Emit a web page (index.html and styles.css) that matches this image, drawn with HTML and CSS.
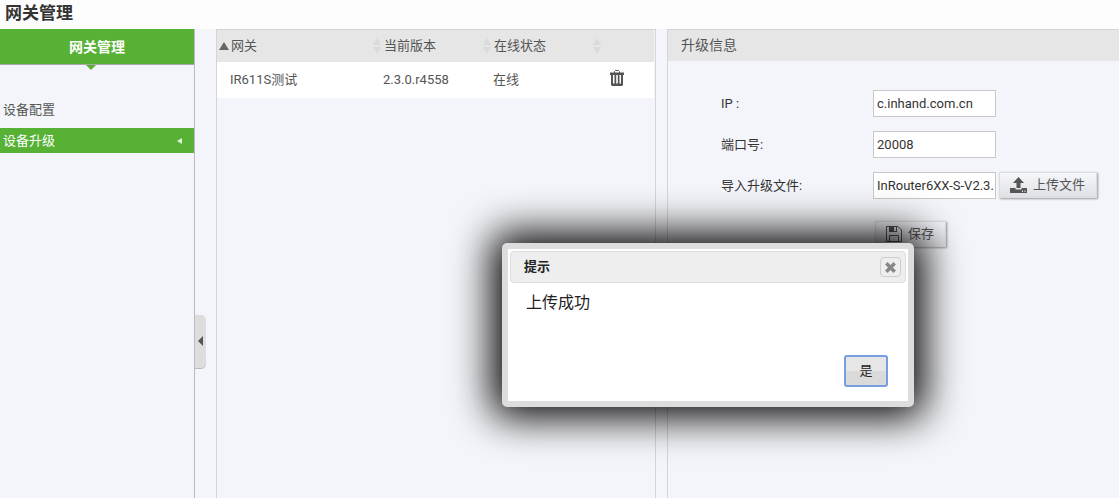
FILE: index.html
```html
<!DOCTYPE html>
<html lang="zh-CN">
<head>
<meta charset="utf-8">
<title>网关管理</title>
<link rel="stylesheet" href="styles.css">
</head>
<body>
<header class="page-header"><h1 class="page-title">网关管理</h1></header>
<div class="layout">
  <nav class="sidebar">
    <h2 class="sidebar-title">网关管理</h2>
    <ul class="menu">
      <li><a class="menu-link" href="#config">设备配置</a></li>
      <li><a class="menu-link active" href="#upgrade">设备升级</a></li>
    </ul>
  </nav>
  <div class="gutter"><button class="collapse" type="button" aria-label="收起"></button></div>
  <main class="content">
    <section class="panel devices">
      <table class="device-table">
        <colgroup><col class="col-name"><col class="col-version"><col class="col-status"><col></colgroup>
        <thead>
          <tr>
            <th><span class="th-inner"><i class="sorted"></i>网关<svg class="sort" viewBox="0 0 8 16"><path d="M4 0 8 7H0zM0 9h8L4 16z"/></svg></span></th>
            <th><span class="th-inner">当前版本<svg class="sort" viewBox="0 0 8 16"><path d="M4 0 8 7H0zM0 9h8L4 16z"/></svg></span></th>
            <th><span class="th-inner">在线状态<svg class="sort" viewBox="0 0 8 16"><path d="M4 0 8 7H0zM0 9h8L4 16z"/></svg></span></th>
            <th></th>
          </tr>
        </thead>
        <tbody>
          <tr>
            <td>IR611S测试</td>
            <td>2.3.0.r4558</td>
            <td>在线</td>
            <td><button class="delete" type="button" aria-label="删除"><svg width="14" height="16" viewBox="0 0 14 16"><path fill="none" stroke="#555" d="M4.500 3V1.500l1-1h3l1 1V3"/><path fill="#555" fill-rule="evenodd" d="M0 2.500h14V5h-1v10l-1 1H2l-1-1V5H0zM3 5v8.500h1.500V5zm3.200 0v8.500h1.600V5zm3.300 0v8.500H11V5z"/></svg></button></td>
          </tr>
        </tbody>
      </table>
    </section>
    <section class="panel upgrade">
      <h3 class="panel-title">升级信息</h3>
      <form class="form">
        <label for="ip">IP :</label>
        <div class="field"><input class="text" id="ip" type="text" value="c.inhand.com.cn"></div>
        <label for="port">端口号:</label>
        <div class="field"><input class="text" id="port" type="text" value="20008"></div>
        <label for="file">导入升级文件:</label>
        <div class="field">
          <input class="text file-name" id="file" type="text" value="InRouter6XX-S-V2.3.">
          <button class="btn" type="button"><svg width="17" height="16" viewBox="0 0 17 16"><path fill="#555" d="M8.500 0 14 6h-3.500v5h-4V6H3z"/><path fill="#555" fill-rule="evenodd" d="M0 11h5.500v1.500h6V11H17v5H0zm12 2.500V15h1v-1.500zm2.500 0V15h1v-1.500z"/></svg>上传文件</button>
        </div>
        <div class="actions"><button class="btn" type="button"><svg width="16" height="16" viewBox="0 0 16 16"><path fill="none" stroke="#555" d="M.5.5h11.500l3.500 3.500v11.500H.5zM3.500 15.500v-6h9v6"/><path fill="#555" fill-rule="evenodd" d="M3 0h8v6H3zm5 1v4h2V1z"/></svg>保存</button></div>
      </form>
    </section>
  </main>
</div>
<div class="dialog" role="dialog" aria-labelledby="dialog-title">
  <div class="dialog-bar">
    <strong id="dialog-title">提示</strong>
    <button class="close" type="button" aria-label="关闭"><svg width="11" height="11" viewBox="0 0 11 11"><path stroke="#888" stroke-width="3.500" d="m1.300 1.300 8.400 8.400m0-8.400L1.300 9.700"/></svg></button>
  </div>
  <p class="message">上传成功</p>
  <div class="dialog-actions"><button class="confirm" type="button">是</button></div>
</div>
</body>
</html>
```
FILE: styles.css
```css
* { box-sizing: border-box; }
body {
  margin: 0;
  min-height: 100vh;
  display: flex;
  flex-direction: column;
  background: #f4f5fa;
  color: #333;
  font: 13px/20px Roboto, "Noto Sans CJK SC", sans-serif;
}
button, input { font: inherit; }
svg { display: block; flex: none; }
.page-header { height: 29px; padding: 0 5px; background: #fdfdfd; }
.page-title { margin: 0; font-size: 17px; line-height: 26px; }
.layout { flex: 1; display: flex; }
.sidebar { flex: none; width: 195px; border-right: 1px solid #bbb; }
.sidebar-title {
  position: relative;
  margin: 0;
  height: 36px;
  border-bottom: 1px solid #aaa;
  background: #56b135;
  color: #fff;
  font-size: 14px;
  line-height: 36px;
  text-align: center;
}
.sidebar-title::after {
  content: "";
  position: absolute;
  top: 36px;
  left: 86px;
  border: 5px solid transparent;
  border-top: 5px solid #56b135;
  border-bottom: 0;
}
.menu { margin: 32px 0 0; padding: 0; list-style: none; }
.menu li + li { margin-top: 6px; }
.menu-link {
  display: flex;
  align-items: center;
  justify-content: space-between;
  height: 25px;
  padding: 0 12px 0 3px;
  color: #555;
  text-decoration: none;
}
.menu-link.active { background: #56b135; color: #fff; }
.menu-link.active::after {
  content: "";
  border: 3px solid transparent;
  border-right: 5px solid #e3f5dc;
  border-left: 0;
}
.gutter { flex: none; width: 21px; display: flex; align-items: center; padding-top: 156px; }
.collapse {
  display: flex;
  align-items: center;
  justify-content: center;
  width: 11px;
  height: 54px;
  padding: 0;
  border: 0;
  border-bottom: 1px solid #bbb;
  border-radius: 0 5px 5px 0;
  background: #ddd;
}
.collapse::after {
  content: "";
  border: 5px solid transparent;
  border-right: 5px solid #555;
  border-left: 0;
}
.content { flex: 1; min-width: 0; display: flex; gap: 11px; }
.panel { min-width: 0; border: 1px solid #d5d5d7; border-bottom: 0; }
.devices { flex: 439 1 0; padding-right: 1px; }
.upgrade { flex: 453 1 0; border-right: 0; }
.device-table { width: 100%; table-layout: fixed; border-collapse: collapse; color: #555; }
.col-name { width: 165px; }
.col-version, .col-status { width: 110px; }
.device-table th { height: 32px; padding: 0 1px 0 2px; background: #e6e6e6; font-weight: 400; text-align: left; }
.th-inner { display: flex; align-items: center; }
.sorted {
  margin-right: 2px;
  border: 5px solid transparent;
  border-top: 0;
  border-bottom: 8px solid #666;
}
.sort { width: 8px; height: 16px; margin-left: auto; fill: #dadada; }
.device-table td { height: 36px; padding: 0 1px; background: #fff; }
.device-table td:first-child { padding-left: 13px; }
.delete { display: block; margin-left: 7px; padding: 0 0 4px; border: 0; background: none; }
.panel-title {
  margin: 0;
  height: 31px;
  padding: 0 13px;
  background: #e6e6e6;
  color: #555;
  font-size: 14px;
  font-weight: 400;
  line-height: 31px;
}
.form {
  display: grid;
  grid-template-columns: 152px 1fr;
  row-gap: 14px;
  align-items: center;
  padding: 29px 0 0 53px;
}
.field { display: flex; gap: 3px; }
.text {
  width: 123px;
  height: 27px;
  padding: 0 3px;
  border: 1px solid #c8c8c8;
  border-radius: 0;
  background: #fff;
  color: #333;
}
.file-name { padding-right: 0; }
.btn {
  display: flex;
  align-items: center;
  gap: 6px;
  height: 26px;
  padding: 0 11px 0 10px;
  border: 1px solid #dcdce0;
  background: linear-gradient(#f6f7fb, #dfe0e5);
  box-shadow: 1px 1px 2px #999;
  color: #555;
}
.actions { grid-column: 2; padding: 8px 0 0 2px; display: flex; }
.dialog {
  position: absolute;
  top: 243px;
  left: 502px;
  width: 412px;
  padding: 2px;
  border: 6px solid #ddd;
  border-radius: 5px;
  background: #fff;
  box-shadow: 0 0 40px 10px #000;
  color: #222;
}
.dialog-bar {
  display: flex;
  align-items: center;
  justify-content: space-between;
  height: 32px;
  padding: 0 4px 0 13px;
  border: 1px solid #ddd;
  border-radius: 4px;
  background: #eee;
}
.close {
  display: flex;
  align-items: center;
  justify-content: center;
  width: 21px;
  height: 20px;
  padding: 0;
  border: 1px solid #ccc;
  border-radius: 4px;
  background: #eee;
}
.message { margin: 8px 16px 0; font-size: 16px; line-height: 24px; }
.dialog-actions { display: flex; justify-content: flex-end; padding: 40px 18px 12px; }
.confirm {
  width: 44px;
  height: 32px;
  padding: 0;
  border: 2px solid #779edf;
  border-radius: 3px;
  background: linear-gradient(#e6e6e6 50%, #dadada 50%);
  color: #222;
}
```
